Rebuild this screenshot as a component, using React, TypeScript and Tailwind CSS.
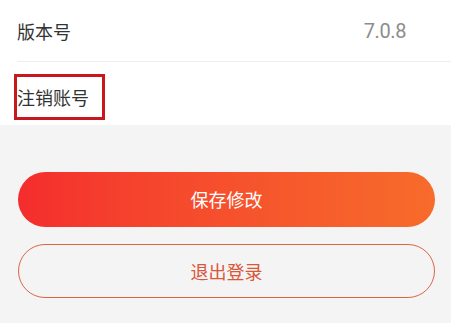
export default function App() {
  const font = { fontFamily: '"Noto Sans CJK SC", "Noto Sans", sans-serif' };
  return (
    <div className="w-[451px] h-[323px] bg-[#f5f4f4] overflow-hidden" style={font}>
      <div className="bg-white pl-[17px]">
        <div className="h-[62px] flex items-center justify-between border-b border-[#eeeeee] pr-[45px]">
          <span className="text-[18px] text-[#333333] leading-none">版本号</span>
          <span className="text-[20px] tracking-[-0.4px] text-[#8c8c8c] leading-none font-['Roboto',sans-serif] pt-[1px]">7.0.8</span>
        </div>
        <div className="h-[63px] pt-[12px]">
          <div className="-ml-[3px] w-[91px] h-[46px] border-[3px] border-[#c9171e] flex items-center">
            <span className="text-[18px] text-[#333333] leading-none">注销账号</span>
          </div>
        </div>
      </div>
      <div className="pl-[18px] pr-[16px] pt-[47px] flex flex-col gap-[17px]">
        <button className="h-[55px] w-full rounded-full bg-gradient-to-r from-[#f42c2d] to-[#f76b2b] text-white text-[18px] flex items-center justify-center">
          保存修改
        </button>
        <button className="h-[54px] w-full rounded-full border-[1.5px] border-[#dc6446] bg-transparent text-[#d9573a] text-[18px] flex items-center justify-center">
          退出登录
        </button>
      </div>
    </div>
  );
}
